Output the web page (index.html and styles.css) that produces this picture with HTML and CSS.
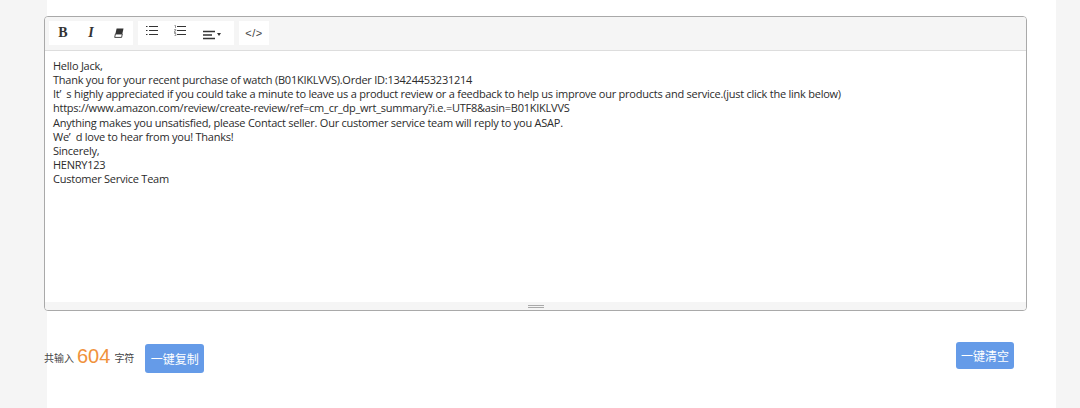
FILE: index.html
```html
<!DOCTYPE html>
<html lang="en">
<head>
<meta charset="utf-8">
<title>Review request</title>
<link rel="stylesheet" href="styles.css">
</head>
<body>
<main class="page">
  <section class="editor">
    <div class="toolbar">
      <div class="group">
        <button class="tool tool-b" type="button">B</button>
        <button class="tool tool-i" type="button">I</button>
        <button class="tool" type="button" aria-label="Clear format">
          <svg width="12" height="12" viewBox="0 0 12 12"><path d="M3.6 1.5H10.5L9.3 7H2.4Z" fill="#333"/><path d="M2.4 7H9.3L8.6 10.4H1.7Z" fill="#fff" stroke="#333" stroke-width=".9"/></svg>
        </button>
      </div>
      <div class="group">
        <button class="tool tool-list" type="button" aria-label="Bullets">
          <svg width="12" height="11" viewBox="0 0 12 11"><path d="M0 1.5H1.5M3 1.5H12M0 5.5H1.5M3 5.5H12M0 9.5H1.5M3 9.5H12" stroke="#333" stroke-width="1.2"/></svg>
        </button>
        <button class="tool tool-list" type="button" aria-label="Numbers">
          <svg width="12" height="11" viewBox="0 0 12 11"><path d="M3 1.5H12M3 5.5H12M3 9.5H12" stroke="#333" stroke-width="1.2"/><path d="M.5 .5H1.5V3M.2 4.5H1.8V6H.3V7.5H1.9M.2 8.5H1.8V11H.2" fill="none" stroke="#555" stroke-width=".6"/></svg>
        </button>
        <button class="tool tool-align" type="button" aria-label="Align">
          <svg width="12" height="10" viewBox="0 0 12 10"><path d="M0 1.5H12M0 5H9M0 8.5H12" stroke="#333" stroke-width="1.4"/></svg>
          <span class="caret"></span>
        </button>
      </div>
      <div class="group">
        <button class="tool tool-code" type="button">&lt;/&gt;</button>
      </div>
    </div>
    <div class="content">
      <div>Hello Jack,</div>
      <div>Thank you for your recent purchase of watch (B01KIKLVVS).Order ID:13424453231214</div>
      <div>It’&nbsp;&nbsp;s highly appreciated if you could take a minute to leave us a product review or a feedback to help us improve our products and service.(just click the link below)</div>
      <div>https://www.amazon.com/review/create-review/ref=cm_cr_dp_wrt_summary?i.e.=UTF8&amp;asin=B01KIKLVVS</div>
      <div>Anything makes you unsatisfied, please Contact seller. Our customer service team will reply to you ASAP.</div>
      <div>We’&nbsp;&nbsp;d love to hear from you! Thanks!</div>
      <div>Sincerely,</div>
      <div>HENRY123</div>
      <div>Customer Service Team</div>
    </div>
    <div class="resizer"><span class="grip"></span></div>
  </section>
  <footer class="actions">
    <div class="count">
      <span class="count-label">共输入</span>
      <span class="count-value">604</span>
      <span class="count-label">字符</span>
      <button class="btn btn-copy" type="button">一键复制</button>
    </div>
    <button class="btn btn-clear" type="button">一键清空</button>
  </footer>
</main>
</body>
</html>
```
FILE: styles.css
```css
* { box-sizing: border-box; }
html, body { margin: 0; height: 100%; }
body {
  background: #f5f5f5;
  font-family: "Open Sans", "Noto Sans CJK SC", sans-serif;
  overflow: hidden;
}
.page {
  margin-left: 47px;
  width: 1009px;
  height: 408px;
  background: #fff;
  padding: 16px 29px 0 0;
  display: flex;
  flex-direction: column;
}
.editor {
  margin-left: -3px;
  width: 983px;
  height: 295px;
  border: 1px solid #a9a9a9;
  border-radius: 4px;
  display: flex;
  flex-direction: column;
  overflow: hidden;
}
.toolbar {
  height: 34px;
  flex: none;
  background: #f5f5f5;
  border-bottom: 1px solid #ddd;
  padding: 4px 0 0 4px;
  display: flex;
  gap: 5px;
}
.group { display: flex; background: #fff; height: 24px; }
.tool {
  width: 28px;
  height: 24px;
  padding: 0;
  border: 0;
  background: #fff;
  color: #333;
  display: flex;
  align-items: center;
  justify-content: center;
  font-size: 12px;
  line-height: 1;
}
.tool-b { font: bold 14px "Liberation Serif", serif; }
.tool-i { font: italic bold 14px "Liberation Serif", serif; }
.tool-list { width: 28px; align-items: flex-start; padding-top: 4px; }
.tool-align { width: 40px; gap: 2px; padding: 3px 5px 0 0; }
.tool-code { width: 30px; font: 11px "Liberation Sans", sans-serif; letter-spacing: .5px; color: #444; }
.caret {
  width: 0;
  height: 0;
  border-left: 2.5px solid transparent;
  border-right: 2.5px solid transparent;
  border-top: 3px solid #333;
}
.content {
  flex: 1;
  padding: 8px 8px;
  font-size: 11px;
  letter-spacing: -.24px;
  line-height: 14.15px;
  color: #2b2b2b;
  background: #fff;
}
.resizer {
  height: 8px;
  flex: none;
  background: #f5f5f5;
  display: flex;
  justify-content: center;
  align-items: center;
}
.grip {
  width: 16px;
  height: 3px;
  border-top: 1px solid #aaa;
  border-bottom: 1px solid #aaa;
}
.actions {
  margin-left: -3px;
  margin-top: 31px;
  width: 970px;
  display: flex;
  justify-content: space-between;
  align-items: flex-start;
}
.count { display: flex; align-items: center; margin-top: 2px; }
.count-label { font-size: 10px; color: #444; margin-bottom: 2px; }
.count-value { font: 20px "Liberation Sans", sans-serif; color: #f0923c; margin: 0 4px 5px 3px; }
.btn {
  width: 59px;
  height: 28px;
  border: 0;
  border-radius: 3px;
  background: #659be8;
  color: #fff;
  font: 12px "Noto Sans CJK SC", sans-serif;
  padding: 0;
}
.btn-copy { margin-left: 11px; height: 29px; }
.btn-clear { width: 58px; height: 27px; }
```
